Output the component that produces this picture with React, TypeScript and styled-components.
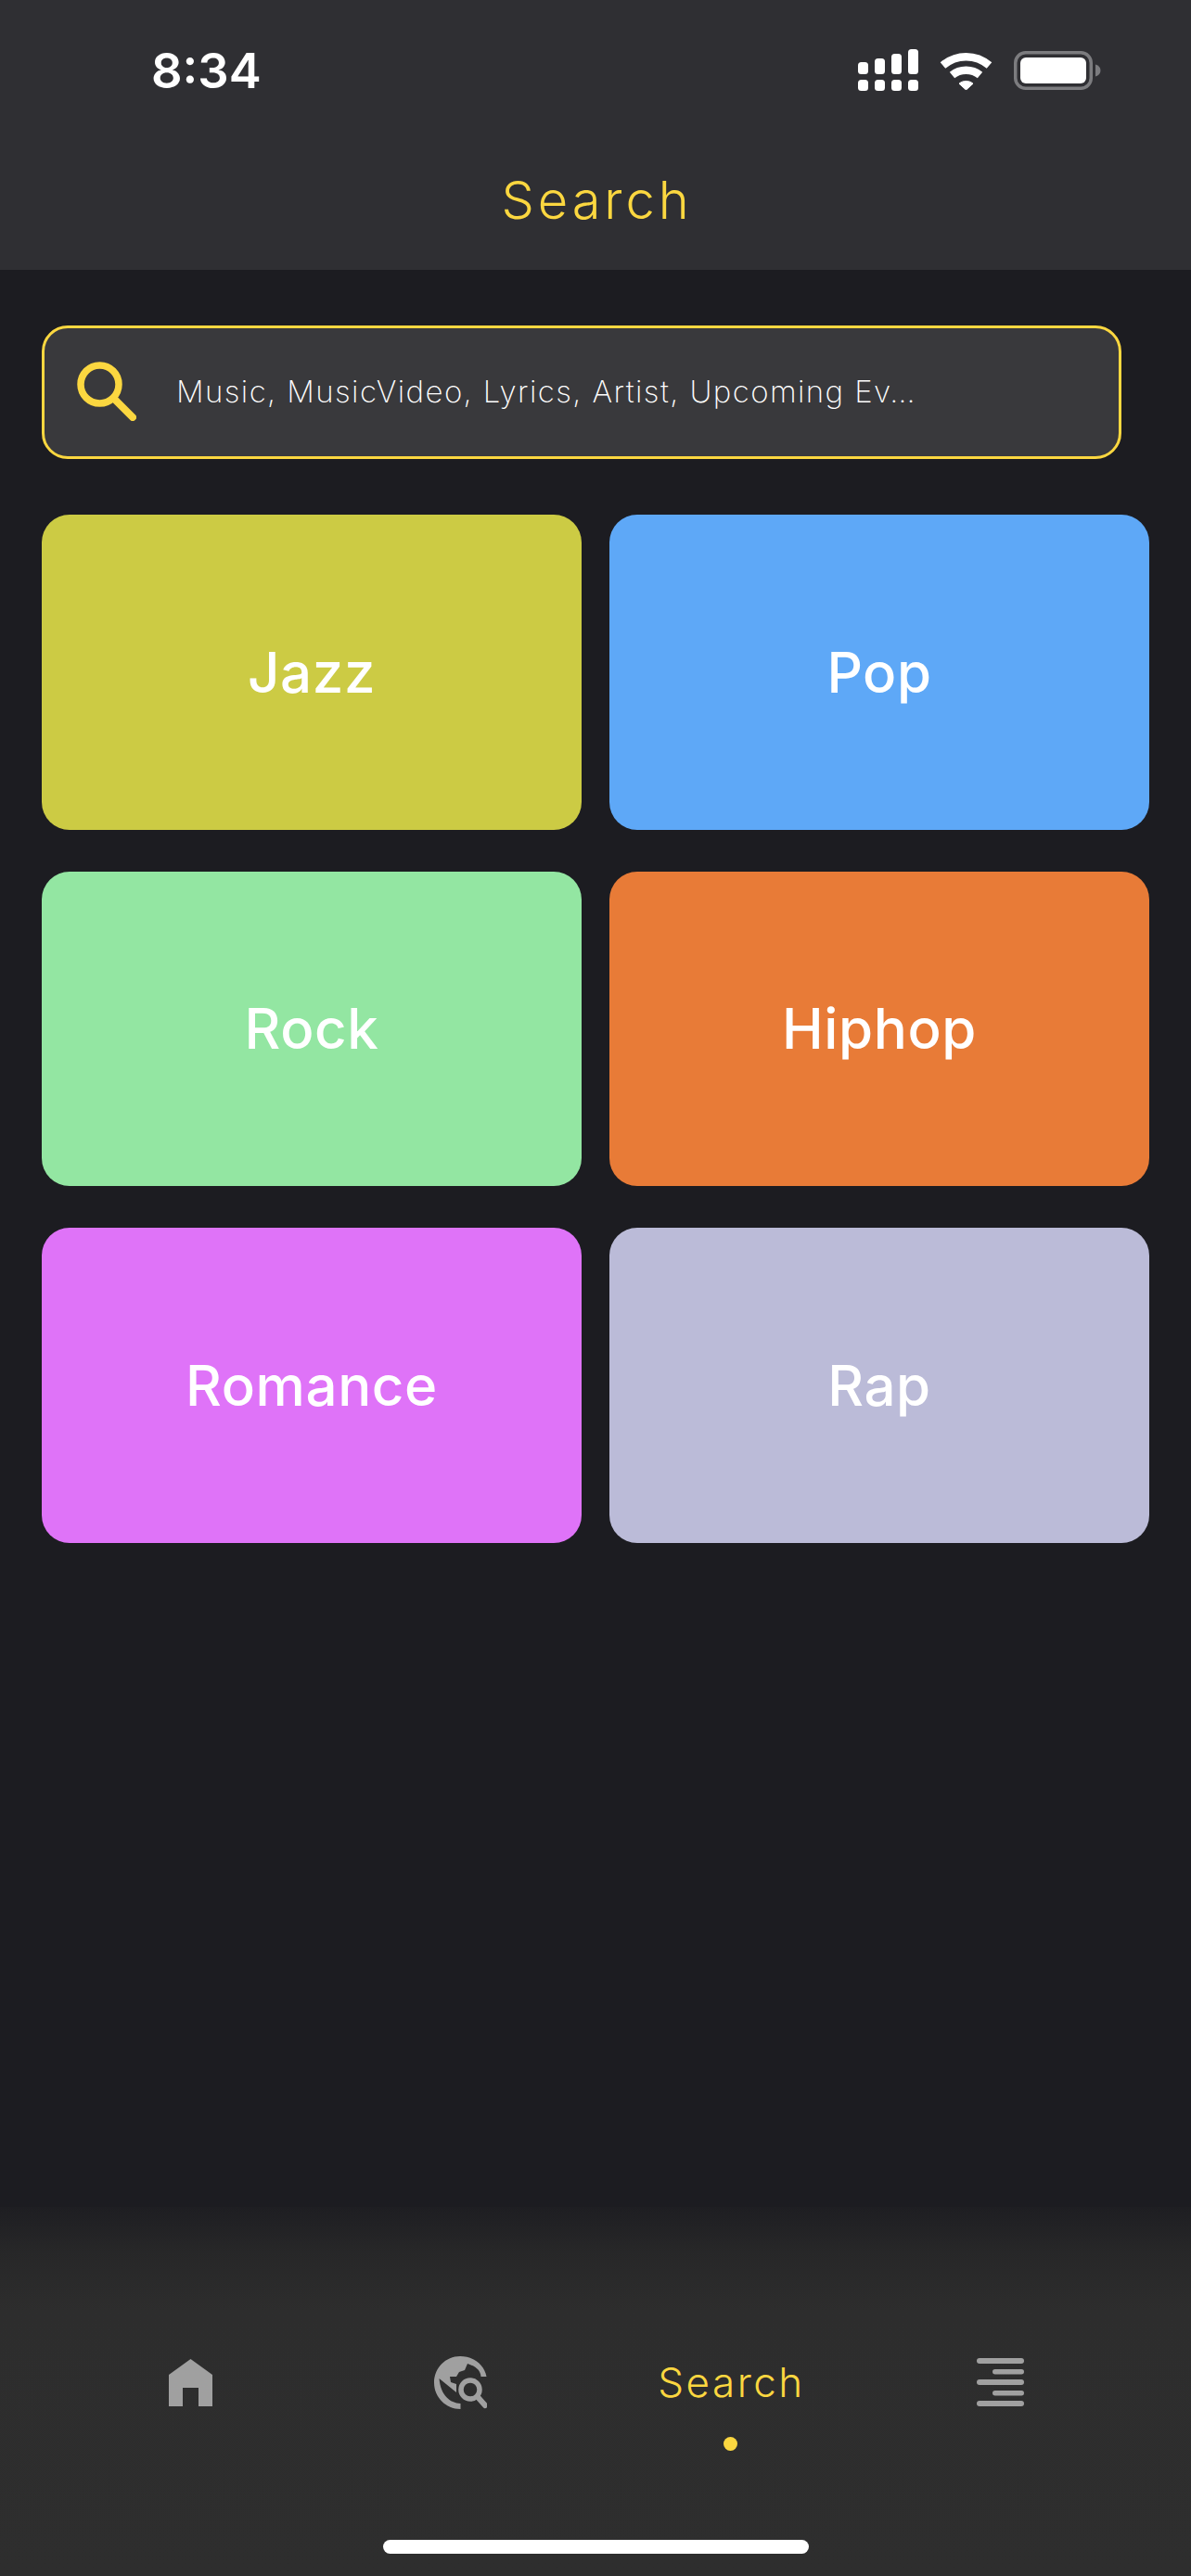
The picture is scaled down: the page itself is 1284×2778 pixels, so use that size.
import React from 'react'
import styled, { createGlobalStyle } from 'styled-components'

const yellow = '#fbd740'
const iconGrey = '#a0a0a0'

const GlobalStyle = createGlobalStyle`
  html, body {
    margin: 0;
    padding: 0;
    background: #1c1c21;
  }
  * {
    box-sizing: border-box;
  }
`

const Screen = styled.div`
  width: 1284px;
  height: 2778px;
  display: flex;
  flex-direction: column;
  background: #1c1c21;
  font-family: Inter, 'Liberation Sans', sans-serif;
  overflow: hidden;
`

const Header = styled.header`
  height: 291px;
  flex: none;
  background: #2f2f33;
  display: flex;
  flex-direction: column;
`

const StatusBar = styled.div`
  height: 184px;
  padding: 48px 97px 0 163px;
  display: flex;
  justify-content: space-between;
  align-items: flex-start;
`

const Clock = styled.div`
  font-size: 52.5px;
  line-height: 56px;
  font-weight: 600;
  color: #fff;
`

const StatusIcons = styled.div`
  display: flex;
  align-items: center;
  gap: 23px;
  margin-top: 5px;
`

const Title = styled.h1`
  margin: 0;
  padding-left: 3px;
  text-align: center;
  font-size: 56px;
  line-height: 64px;
  font-weight: 300;
  letter-spacing: 3.9px;
  color: ${yellow};
`

const Content = styled.main`
  flex: 1;
  padding: 60px 45px 0;
`

const SearchBox = styled.div`
  width: 1164px;
  height: 144px;
  background: #39393c;
  border: 3px solid ${yellow};
  border-radius: 28px;
  display: flex;
  align-items: center;
  gap: 43px;
  padding: 0 0 2px 35px;
`

const Placeholder = styled.span`
  font-size: 33px;
  font-weight: 250;
  letter-spacing: 1.4px;
  color: #fff;
  white-space: nowrap;
`

const Genres = styled.div`
  margin-top: 60px;
  display: grid;
  grid-template-columns: 582px 582px;
  grid-auto-rows: 339.5px;
  column-gap: 30px;
  row-gap: 45px;
`

const GenreCard = styled.div<{ $bg: string }>`
  background: ${(p) => p.$bg};
  border-radius: 30px;
  display: flex;
  align-items: center;
  justify-content: center;
  font-size: 60px;
  font-weight: 500;
  letter-spacing: 0.6px;
  color: #fff;
`

const TabBar = styled.footer`
  height: 398px;
  flex: none;
  background: linear-gradient(180deg, #1e1e22 0%, #272728 12%, #2d2d2d 28%, #2e2e2e 100%);
  padding: 151px 60px 0;
  display: flex;
  flex-direction: column;
`

const Tabs = styled.nav`
  display: grid;
  grid-template-columns: repeat(4, 291px);
  height: 208px;
`

const Tab = styled.div`
  display: flex;
  flex-direction: column;
  align-items: center;
`

const TabIconSlot = styled.div`
  height: 76px;
  display: flex;
  align-items: center;
  justify-content: center;
`

const TabLabel = styled.span`
  padding-left: 2px;
  font-size: 44px;
  line-height: 60px;
  font-weight: 300;
  letter-spacing: 2.5px;
  color: ${yellow};
`

const ActiveDot = styled.span`
  width: 15px;
  height: 15px;
  border-radius: 50%;
  background: ${yellow};
  margin-top: 21px;
`

const HomeIndicator = styled.div`
  width: 459px;
  height: 15px;
  border-radius: 8px;
  background: #fff;
  align-self: center;
`

const SignalIcon = () => (
  <svg width="65" height="45" viewBox="0 0 65 45" fill="#fff">
    <rect x="0" y="14" width="11" height="13" rx="3.5" />
    <rect x="18" y="10" width="11" height="17" rx="3.5" />
    <rect x="36" y="5" width="11" height="22" rx="3.5" />
    <rect x="54" y="0" width="11" height="27" rx="3.5" />
    <rect x="0" y="33" width="11" height="12" rx="3.5" />
    <rect x="18" y="33" width="11" height="12" rx="3.5" />
    <rect x="36" y="33" width="11" height="12" rx="3.5" />
    <rect x="54" y="33" width="11" height="12" rx="3.5" />
  </svg>
)

const WifiIcon = () => (
  <svg width="57" height="42" viewBox="0 0 57 42" fill="none" stroke="#fff" strokeWidth="8.5">
    <path d="M3.5 15.5C18 3 39 3 53.5 15.5" />
    <path d="M13.5 26C22 19 35 19 43.5 26" />
    <path d="M21 35.2C25 31.5 32 31.5 36 35.2L28.5 42Z" fill="#fff" stroke="#fff" strokeWidth="1" strokeLinejoin="round" />
  </svg>
)

const BatteryIcon = () => (
  <svg width="94" height="42" viewBox="0 0 94 42">
    <rect x="1.75" y="1.75" width="81.5" height="38.5" rx="11" fill="none" stroke="#7c7c7f" strokeWidth="3.5" />
    <rect x="7" y="7" width="71" height="28" rx="6" fill="#fff" />
    <path d="M88 14.5C91.5 15.5 93.5 18 93.5 21C93.5 24 91.5 26.5 88 27.5Z" fill="#7c7c7f" />
  </svg>
)

const SearchIcon = () => (
  <svg width="64" height="64" viewBox="0 0 64 64" fill="none" stroke={yellow} strokeWidth="7.5">
    <circle cx="24.5" cy="24.5" r="20.5" />
    <path d="M42 42L60 60" strokeWidth="8" strokeLinecap="round" />
  </svg>
)

const HomeIcon = () => (
  <svg width="47" height="51" viewBox="0 0 47 51" fill={iconGrey}>
    <path d="M23.5 0L47 17V51H32V31H15V51H0V17Z" />
  </svg>
)

const GlobeIcon = () => (
  <svg width="57" height="57" viewBox="0 0 57 57" fill="none">
    <path
      d="M28 0C12.5 0 0 12.5 0 28.5C0 44 12.5 57 28.5 57V51C17 50.5 7 42 5.500 24L24 39V30L18 28L17 22H24L27 17L33 15L36 8C45 11 50 15 50.500 22H56.500C54 9 42 0 28 0Z"
      fill={iconGrey}
    />
    <circle cx="39" cy="36" r="10" stroke={iconGrey} strokeWidth="5.5" />
    <path d="M47 44L55 53" stroke={iconGrey} strokeWidth="6" strokeLinecap="round" />
  </svg>
)

const MenuIcon = () => (
  <svg width="51" height="52" viewBox="0 0 51 52" fill={iconGrey}>
    <rect x="0" y="0" width="51" height="6" rx="3" />
    <rect x="17" y="12" width="34" height="5.5" rx="2.75" />
    <rect x="0" y="23" width="51" height="6" rx="3" />
    <rect x="17" y="35" width="34" height="5.5" rx="2.75" />
    <rect x="0" y="46" width="51" height="6" rx="3" />
  </svg>
)

const genres = [
  { name: 'Jazz', color: '#cccb44' },
  { name: 'Pop', color: '#5ea8f7' },
  { name: 'Rock', color: '#93e6a2' },
  { name: 'Hiphop', color: '#e87b37' },
  { name: 'Romance', color: '#df73f8' },
  { name: 'Rap', color: '#bbbbd8' },
]

const App: React.FC = () => {
  return (
    <Screen>
      <GlobalStyle />
      <Header>
        <StatusBar>
          <Clock>8:34</Clock>
          <StatusIcons>
            <SignalIcon />
            <WifiIcon />
            <BatteryIcon />
          </StatusIcons>
        </StatusBar>
        <Title>Search</Title>
      </Header>

      <Content>
        <SearchBox>
          <SearchIcon />
          <Placeholder>Music, MusicVideo, Lyrics, Artist, Upcoming Ev…</Placeholder>
        </SearchBox>
        <Genres>
          {genres.map((g) => (
            <GenreCard key={g.name} $bg={g.color}>
              {g.name}
            </GenreCard>
          ))}
        </Genres>
      </Content>

      <TabBar>
        <Tabs>
          <Tab>
            <TabIconSlot>
              <HomeIcon />
            </TabIconSlot>
          </Tab>
          <Tab>
            <TabIconSlot>
              <GlobeIcon />
            </TabIconSlot>
          </Tab>
          <Tab>
            <TabIconSlot>
              <TabLabel>Search</TabLabel>
            </TabIconSlot>
            <ActiveDot />
          </Tab>
          <Tab>
            <TabIconSlot>
              <MenuIcon />
            </TabIconSlot>
          </Tab>
        </Tabs>
        <HomeIndicator />
      </TabBar>
    </Screen>
  )
}

export default App
